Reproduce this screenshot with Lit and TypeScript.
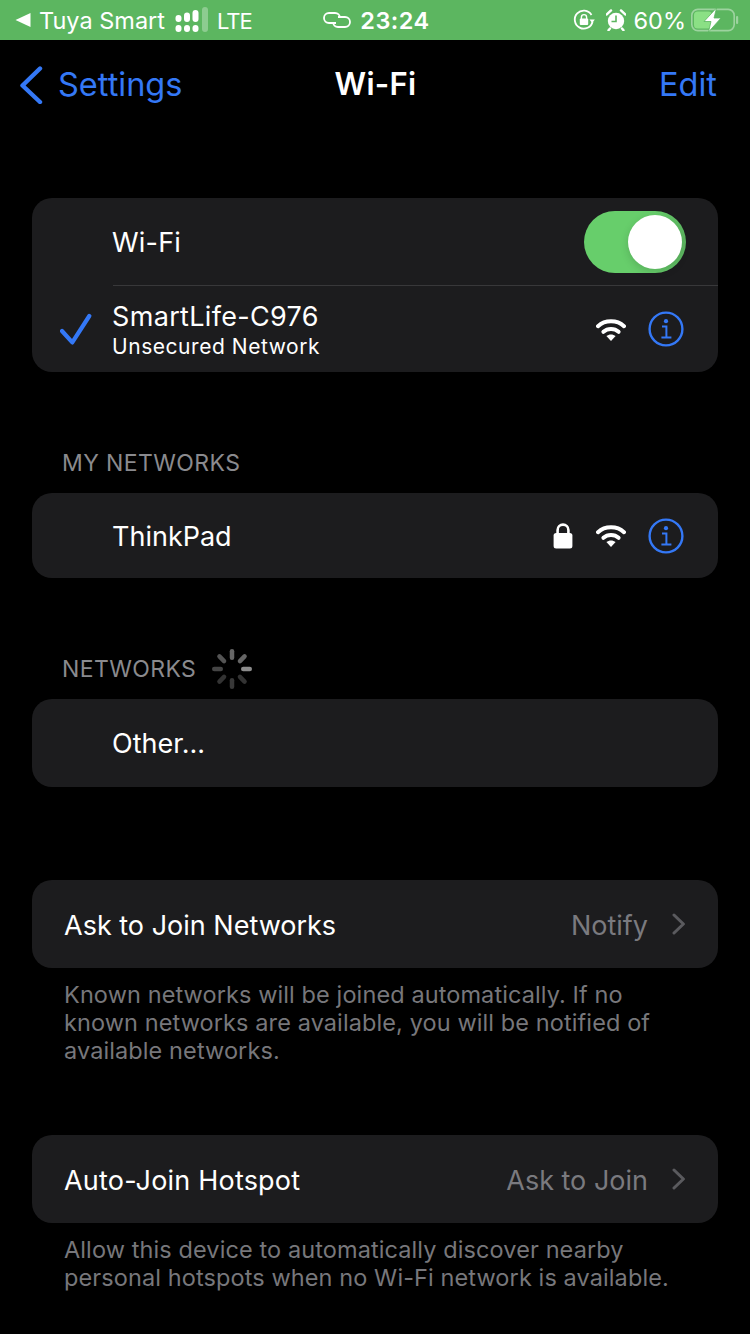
import { LitElement, html, css, svg } from "lit";
import { customElement } from "lit/decorators.js";

const wifi = html`<svg class="wifi" viewBox="0 0 30 23" width="30" height="23">
  <path d="M2 8.2C9 1.6 21 1.6 28 8.2" fill="none" stroke="#fff" stroke-width="4" stroke-linecap="round"/>
  <path d="M7.4 13.8C11.6 10 18.4 10 22.6 13.8" fill="none" stroke="#fff" stroke-width="4" stroke-linecap="round"/>
  <path d="M10.4 18.1C13 15.8 17 15.8 19.6 18.1L15 22.9Z" fill="#fff"/>
</svg>`;

const info = html`<svg class="info" viewBox="0 0 36 36" width="36" height="36">
  <circle cx="18" cy="18" r="16.4" fill="none" stroke="#3478f6" stroke-width="2.4"/>
  <circle cx="18" cy="10.2" r="2.1" fill="#3478f6"/>
  <path d="M14 15.6H18.4V26M13.4 26.6H23.4" fill="none" stroke="#3478f6" stroke-width="2"/>
</svg>`;

const chevron = html`<svg class="chev" viewBox="0 0 14 22" width="14" height="22">
  <path d="M2 2L11.4 11L2 20" fill="none" stroke="#5a5a5e" stroke-width="3" stroke-linecap="round" stroke-linejoin="round"/>
</svg>`;

const spokes = [0, 45, 90, 135, 180, 225, 270, 315];
const spokeOp = [0.4, 0.4, 0.55, 0.2, 0.22, 0.2, 0.27, 0.33];
const spinner = html`<svg class="spin" viewBox="0 0 40 40" width="40" height="40">
  ${spokes.map(
    (a, i) => svg`<rect x="17.75" y="0" width="4.5" height="11" rx="2.25" fill="#fff" opacity=${spokeOp[i]} transform="rotate(${a} 20 20)"/>`
  )}
</svg>`;

@customElement("app-root")
export class AppRoot extends LitElement {
  static styles = css`
    :host {
      display: block;
      width: 750px;
      height: 1334px;
      overflow: hidden;
      background: #000;
      font-family: Inter, "Liberation Sans", sans-serif;
      color: #fff;
    }
    .status {
      height: 40px;
      background: #5cb660;
      display: grid;
      grid-template-columns: 1fr auto 1fr;
      align-items: center;
      font-size: 23.5px;
      padding: 0 14px 0 15px;
    }
    .s-left, .s-right, .s-mid { display: flex; align-items: center; }
    .s-left { gap: 8px; }
    .t { padding-top: 1px; }
    .s-left .sig { margin-left: 2px; }
    .s-left .lte { font-size: 22px; letter-spacing: -1px; }
    .s-mid { gap: 9px; font-weight: 600; letter-spacing: 0.5px; }
    .s-right { justify-content: flex-end; margin-right: -3px; }
    .s-right .pct { margin: 0 5px 0 8px; }
    .s-right .alarm { margin-left: 11px; }

    .nav {
      height: 66px;
      display: grid;
      grid-template-columns: 1fr auto 1fr;
      align-items: start;
      padding: 24px 33px 0 34px;
      font-size: 32.5px;
      line-height: 40px;
      color: #3478f6;
    }
    .back { display: flex; align-items: center; gap: 15px; margin-left: -15px; }
    .title { color: #fff; font-weight: 600; font-size: 31px; letter-spacing: 0.3px; }
    .edit { text-align: right; }

    main { padding: 68px 32px 0; }
    .card {
      background: #1c1c1e;
      border-radius: 20px;
      overflow: hidden;
    }
    .row {
      display: grid;
      grid-template-columns: 80px 1fr auto;
      align-items: center;
      font-size: 27px;
    }
    .txt { padding-top: 2px; }
    .sp { letter-spacing: 0.2px; }
    .mark { display: flex; justify-content: center; padding-left: 8px; padding-bottom: 1px; }
    .tools { display: flex; align-items: center; padding-right: 34px; }
    .tools .lock { margin-right: 23px; }
    .tools .wifi { margin-right: 22px; }
    .r-toggle { height: 87px; }
    .r-toggle .tools { padding-right: 32px; }
    .sep { height: 1px; background: #38383a; margin-left: 81px; }
    .r-net { height: 86px; }
    .name { line-height: 32px; letter-spacing: 0.33px; }
    .sub { font-size: 21px; line-height: 26px; letter-spacing: 0.55px; margin-top: 1px; }
    .r-single1 { height: 85px; }
    .r-single2 { height: 88px; }

    .toggle {
      width: 102px;
      height: 62px;
      border-radius: 31px;
      background: linear-gradient(90deg, #67ce6b 0 70%, #5cb660 100%);
      position: relative;
    }
    .knob {
      position: absolute;
      left: 44px;
      top: 4px;
      width: 54px;
      height: 54px;
      border-radius: 50%;
      background: #fff;
      box-shadow: 0 3px 8px rgba(0, 0, 0, 0.15);
    }

    .head {
      display: flex;
      align-items: center;
      color: #8a8a8e;
      font-size: 23px;
      letter-spacing: 0.4px;
      padding-left: 30px;
      height: 40px;
      margin-top: 71px;
      margin-bottom: 10px;
    }
    .head .spin { margin-left: 16px; }

    .link {
      display: flex;
      align-items: center;
      height: 88px;
      padding: 0 32px;
      font-size: 27px;
    }
    .link .lab { flex: 1; }
    .link .val { color: #7a7a7f; margin-right: 24px; }
    .foot {
      color: #77777b;
      font-size: 23.5px;
      line-height: 28px;
      padding: 13px 30px 0 32px;
      letter-spacing: 0.1px;
    }
    .c3 { margin-top: 93px; }
    .c4 { margin-top: 70px; }
  `;

  render() {
    return html`
      <div class="status">
        <div class="s-left">
          <svg viewBox="0 0 16 16" width="16" height="16"><path d="M0.5 8L15.5 1V15Z" fill="#fff"/></svg>
          <span class="t">Tuya Smart</span>
          <svg class="sig" viewBox="0 0 34 26" width="34" height="26">
            <g fill="#fff">
              <rect x="0.5" y="18" width="6" height="7" rx="3"/><rect x="9" y="18" width="6" height="7" rx="3"/><rect x="17.5" y="18" width="6" height="7" rx="3"/>
              <rect x="0.5" y="8" width="6" height="7" rx="3"/><rect x="9" y="5.5" width="6" height="9.5" rx="3"/><rect x="17.5" y="3" width="6" height="12" rx="3"/>
            </g>
            <rect x="27" y="0" width="6" height="25" rx="3" fill="#fff" opacity="0.3"/>
          </svg>
          <span class="lte t">LTE</span>
        </div>
        <div class="s-mid">
          <svg viewBox="-2 0 30 16" width="30" height="16" fill="none" stroke="#fff" stroke-width="1.8">
            <path d="M13 11H6A5 5 0 0 1 6 1H12A5 5 0 0 1 17 6"/>
            <path d="M15 5H22A5 5 0 0 1 22 15H15A5 5 0 0 1 10 10"/>
          </svg>
          <span class="t">23:24</span>
        </div>
        <div class="s-right">
          <svg viewBox="0 0 22 22" width="22" height="22">
            <path d="M19.6 12.5A9 9 0 1 1 18.5 6" fill="none" stroke="#fff" stroke-width="1.8"/>
            <path d="M16.5 10.5H21.8L19.2 14Z" fill="#fff"/>
            <rect x="6.8" y="9.6" width="8.4" height="6.4" rx="1" fill="#fff"/>
            <path d="M8.4 10V8.2A2.6 2.6 0 0 1 13.6 8.2V10" fill="none" stroke="#fff" stroke-width="1.4"/>
          </svg>
          <svg class="alarm" viewBox="0 0 20 22" width="20" height="22">
            <circle cx="10" cy="12" r="8.2" fill="#fff"/>
            <path d="M10 6.5V12.5H5.5" fill="none" stroke="#5cb660" stroke-width="1.6"/>
            <path d="M0.8 5.5L5 1.4M19.2 5.5L15 1.4M4 19.5L2.5 21.3M16 19.5L17.5 21.3" stroke="#fff" stroke-width="2.4" stroke-linecap="round"/>
          </svg>
          <span class="pct t">60%</span>
          <svg viewBox="0 0 48 24" width="48" height="24">
            <rect x="0.8" y="1.4" width="42.4" height="21.2" rx="6" fill="none" stroke="#fff" stroke-opacity="0.4" stroke-width="1.6"/>
            <rect x="3" y="3.6" width="18" height="16.8" rx="3.5" fill="#8be085"/>
            <rect x="45" y="8" width="2.2" height="8" rx="1.1" fill="#fff" opacity="0.4"/>
            <path d="M25.5 0L13 13.5H20L17.5 24L30 10H23Z" fill="#fff" stroke="#5cb660" stroke-width="0.8"/>
          </svg>
        </div>
      </div>

      <div class="nav">
        <div class="back">
          <svg viewBox="0 0 24 38" width="24" height="38">
            <path d="M21 2.5L3.5 19.5L21 36" fill="none" stroke="#3478f6" stroke-width="4.4" stroke-linecap="round" stroke-linejoin="round"/>
          </svg>
          <span class="t">Settings</span>
        </div>
        <div class="title">Wi-Fi</div>
        <div class="edit t">Edit</div>
      </div>

      <main>
        <div class="card">
          <div class="row r-toggle">
            <span></span><span class="txt sp">Wi-Fi</span>
            <div class="tools"><div class="toggle"><div class="knob"></div></div></div>
          </div>
          <div class="sep"></div>
          <div class="row r-net">
            <div class="mark">
              <svg viewBox="0 0 32 32" width="32" height="32">
                <path d="M2 18L12.3 29.4L29.3 3" fill="none" stroke="#3478f6" stroke-width="4.2" stroke-linecap="round" stroke-linejoin="round"/>
              </svg>
            </div>
            <div class="txt">
              <div class="name">SmartLife-C976</div>
              <div class="sub">Unsecured Network</div>
            </div>
            <div class="tools">${wifi}${info}</div>
          </div>
        </div>

        <div class="head">MY NETWORKS</div>
        <div class="card">
          <div class="row r-single1">
            <span></span><span class="txt">ThinkPad</span>
            <div class="tools">
              <svg class="lock" viewBox="0 0 20 26" width="20" height="26">
                <rect x="0.6" y="10" width="18.8" height="15.6" rx="2.5" fill="#fff"/>
                <path d="M4.6 11V7A5.4 5.4 0 0 1 15.4 7V11" fill="none" stroke="#fff" stroke-width="2.6"/>
              </svg>
              ${wifi}${info}
            </div>
          </div>
        </div>

        <div class="head">NETWORKS ${spinner}</div>
        <div class="card">
          <div class="row r-single2"><span></span><span>Other...</span></div>
        </div>

        <div class="card c3">
          <div class="link"><span class="lab txt">Ask to Join Networks</span><span class="val txt">Notify</span>${chevron}</div>
        </div>
        <div class="foot">Known networks will be joined automatically. If no known networks are available, you will be notified of available networks.</div>

        <div class="card c4">
          <div class="link"><span class="lab txt sp">Auto-Join Hotspot</span><span class="val txt">Ask to Join</span>${chevron}</div>
        </div>
        <div class="foot">Allow this device to automatically discover nearby personal hotspots when no Wi-Fi network is available.</div>
      </main>
    `;
  }
}
